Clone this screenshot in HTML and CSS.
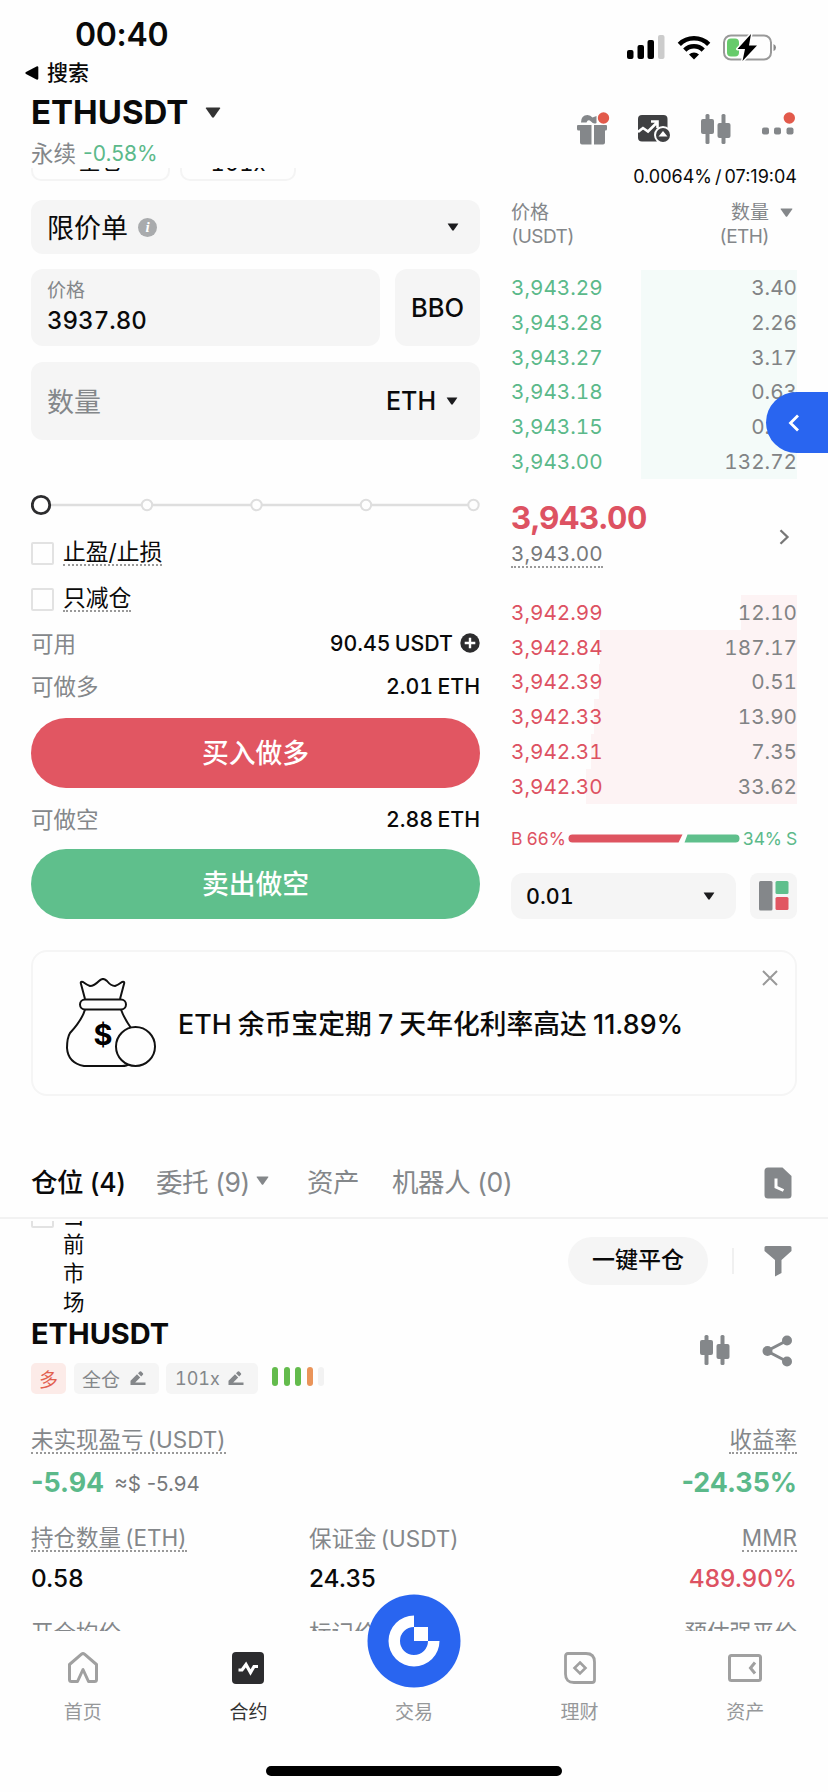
FILE: index.html
```html
<!DOCTYPE html>
<html lang="zh-CN">
<head>
<meta charset="utf-8">
<title>ETHUSDT 永续</title>
<link rel="stylesheet" href="styles.css">
</head>
<body>
<svg class="defs" width="0" height="0">
  <symbol id="tri" viewBox="0 0 14 10"><path d="M1 0.5h12q1 0 .4 .9L8 9.200q-1 1.200-2 0L.6 1.400Q0 .5 1 .5z" fill="currentColor"/></symbol>
  <symbol id="candles" viewBox="0 0 30 30"><g fill="currentColor"><rect x="4.500" y="0" width="4" height="30" rx="1.500"/><rect x="0" y="5" width="13" height="15" rx="2"/><rect x="20.500" y="0" width="4" height="30" rx="1.500"/><rect x="16.500" y="9" width="13" height="15" rx="2"/></g></symbol>
  <symbol id="pencil" viewBox="0 0 16 15"><path d="M.5 12.500V9.800L7 3.300l3.200 3.200-5 5H15.500V14H.5zM8 2.300 9.800.6q.7-.6 1.400 0l1.700 1.700q.7.7 0 1.400L11.200 5.500z" fill="currentColor"/></symbol>
</svg>
<div class="screen">
  <div class="status">
    <span class="time">00:40</span>
    <div class="status-icons">
      <svg width="38" height="24" viewBox="0 0 38 24"><rect x="0" y="15" width="6.500" height="9" rx="2"/><rect x="10.500" y="10" width="6.500" height="14" rx="2"/><rect x="20.500" y="5" width="6.500" height="19" rx="2"/><rect x="31" y="0" width="6.500" height="24" rx="2" fill="#ccc"/></svg>
      <svg width="34" height="25" viewBox="0 0 34 25"><g fill="none" stroke="#000" stroke-width="4.600"><path d="M2.300 9.300a21 21 0 0 1 29.400 0"/><path d="M7.800 15a13 13 0 0 1 18.400 0"/></g><path d="M17 24.500l-5-5a7.200 7.200 0 0 1 10 0z"/></svg>
      <svg width="54" height="27" viewBox="0 0 54 27"><rect x="1" y="1.500" width="47" height="24" rx="7" fill="none" stroke="#999" stroke-width="2"/><path d="M50.500 10v7q2.500-1 2.500-3.500t-2.500-3.500z" fill="#888"/><rect x="4" y="4.500" width="12" height="18" rx="4" fill="#67cb6b"/><path d="M28 0 14.500 15H22l-2.500 12L34 11.500h-8z" stroke="#fefefe" stroke-width="3" paint-order="stroke" stroke-linejoin="round"/></svg>
    </div>
  </div>
  <div class="back"><svg width="14" height="14" viewBox="0 0 14 14"><path d="M1 6Q-.3 7 1 8l10.500 5.600q1.800.6 1.800-1V1.400q0-1.600-1.800-1z"/></svg><span>搜索</span></div>

  <header class="header">
    <div class="head-left">
      <div class="pair"><span class="symbol">ETHUSDT</span><svg class="c-dark" width="16" height="11"><use href="#tri"/></svg></div>
      <div class="perp"><span>永续</span><span class="pct">-0.58%</span></div>
    </div>
    <div class="head-icons">
      <svg width="34" height="34" viewBox="0 0 34 34"><g fill="#84878a"><path d="M1 13h13.500v19.500H5q-2 0-2-2V18.500H1.500Q0 18.500 0 17v-3q0-1 1-1zM17 13h12q1 0 1 1v3q0 1.500-1.500 1.500H28v12q0 2-2 2h-9z"/><path d="M4 10.500q0-7.500 6.500-7.500 3 0 5 2.500l4-1.500v7q-3 1.500-5.500-1.500Q11 6.500 9.500 10.500z"/></g><circle cx="26.500" cy="6" r="5.700" fill="#e25a4b"/></svg>
      <svg class="g1" width="34" height="28" viewBox="0 0 34 28"><rect x="0" y="0" width="29.500" height="26.500" rx="4" fill="#3f4042"/><path d="M0 17l5-4 5 3.500 9-9M13 6.500h6.500V13" fill="none" stroke="#fff" stroke-width="2.600"/><circle cx="25" cy="20" r="9" fill="#fefefe"/><circle cx="25" cy="20" r="7" fill="#3f4042"/><path d="M25 16l4.500 5.500h-9z" fill="#fff"/></svg>
      <svg class="g2 c-gray" width="30" height="30"><use href="#candles"/></svg>
      <svg class="g3" width="34" height="34" viewBox="0 0 34 34"><g fill="#84878a"><rect x="0" y="15.500" width="7" height="7" rx="2"/><rect x="12" y="15.500" width="7" height="7" rx="2"/><rect x="24.500" y="15.500" width="7" height="7" rx="2"/></g><circle cx="27.300" cy="6" r="5.700" fill="#e25a4b"/></svg>
    </div>
  </header>

  <div class="trade">
    <section class="form">
      <div class="chips"><span class="chip chip-a">全仓</span><span class="chip chip-b">101x</span></div>
      <div class="field select"><span class="type">限价单</span><i class="info">i</i><svg class="push c-black" width="12" height="8"><use href="#tri"/></svg></div>
      <div class="price-row">
        <div class="field price"><span class="lbl">价格</span><span class="val">3937.80</span></div>
        <div class="field bbo">BBO</div>
      </div>
      <div class="field amount"><span class="ph">数量</span><span class="unit">ETH</span><svg class="c-black" width="12" height="8"><use href="#tri"/></svg></div>
      <svg class="slider" width="449" height="22" viewBox="0 0 449 22"><path d="M20 11H440" stroke="#dedede" stroke-width="2.500"/><g fill="#fefefe" stroke="#dedede" stroke-width="2"><circle cx="116" cy="11" r="5.200"/><circle cx="225.500" cy="11" r="5.200"/><circle cx="335" cy="11" r="5.200"/><circle cx="442.500" cy="11" r="5.200"/></g><circle cx="10" cy="11" r="8.700" fill="#fefefe" stroke="#2c2c2e" stroke-width="2.800"/></svg>
      <div class="check"><i class="box"></i><span class="dot">止盈/止损</span></div>
      <div class="check"><i class="box"></i><span class="dot">只减仓</span></div>
      <div class="kv avail"><span>可用</span><b>90.45 USDT</b><svg width="20" height="20" viewBox="0 0 20 20"><circle cx="10" cy="10" r="9.700" fill="#2c2c2e"/><path d="M10 4.700v10.600M4.700 10h10.600" stroke="#fff" stroke-width="2.400"/></svg></div>
      <div class="kv long"><span>可做多</span><b>2.01 ETH</b></div>
      <button class="btn buy">买入做多</button>
      <div class="kv short"><span>可做空</span><b>2.88 ETH</b></div>
      <button class="btn sell">卖出做空</button>
    </section>

    <section class="book">
      <div class="funding">0.0064% / 07:19:04</div>
      <div class="book-head">
        <div>价格<br><span class="u">(USDT)</span></div>
        <div class="qty-head"><div>数量<br><span class="u">(ETH)</span></div><svg width="13" height="9"><use href="#tri"/></svg></div>
      </div>
      <div class="rows up">
        <div class="row" style="--w:156px"><span>3,943.29</span><em>3.40</em></div>
        <div class="row" style="--w:156px"><span>3,943.28</span><em>2.26</em></div>
        <div class="row" style="--w:156px"><span>3,943.27</span><em>3.17</em></div>
        <div class="row" style="--w:156px"><span>3,943.18</span><em>0.63</em></div>
        <div class="row" style="--w:156px"><span>3,943.15</span><em>0.15</em></div>
        <div class="row" style="--w:156px"><span>3,943.00</span><em>132.72</em></div>
        <div class="drawer"><svg width="12" height="18" viewBox="0 0 12 18"><path d="M10 1.500 2.500 9l7.500 7.500" fill="none" stroke="#fff" stroke-width="2.800"/></svg></div>
      </div>
      <div class="mid">
        <div><div class="last">3,943.00</div><span class="mark">3,943.00</span></div>
        <svg width="11" height="16" viewBox="0 0 11 16"><path d="M1.500 1.200 8.500 8l-7 6.800" fill="none" stroke="#777" stroke-width="2.300"/></svg>
      </div>
      <div class="rows down">
        <div class="row" style="--w:56px"><span>3,942.99</span><em>12.10</em></div>
        <div class="row" style="--w:197px"><span>3,942.84</span><em>187.17</em></div>
        <div class="row" style="--w:198px"><span>3,942.39</span><em>0.51</em></div>
        <div class="row" style="--w:203px"><span>3,942.33</span><em>13.90</em></div>
        <div class="row" style="--w:206px"><span>3,942.31</span><em>7.35</em></div>
        <div class="row" style="--w:211px"><span>3,942.30</span><em>33.62</em></div>
      </div>
      <div class="ratio"><span class="b">B 66%</span><svg width="172" height="9" viewBox="0 0 172 9"><path d="M4.500.5H114.500L110.500 8.500H4.500a4 4 0 0 1 0-8z" fill="#de5460"/><path d="M119.500.5H167.500a4 4 0 0 1 0 8H116.500z" fill="#5fbf8c"/></svg><span class="s">34% S</span></div>
      <div class="tick">
        <div class="field step"><span>0.01</span><svg class="c-black" width="12" height="8"><use href="#tri"/></svg></div>
        <div class="field layout"><svg width="30" height="30" viewBox="0 0 30 30"><rect x="0" y="0" width="13.500" height="29.500" rx="1.500" fill="#84878a"/><rect x="16.500" y="0" width="13" height="13" rx="1.500" fill="#5fbf8c"/><rect x="16.500" y="16" width="13" height="13" rx="1.500" fill="#e15662"/></svg></div>
      </div>
    </section>
  </div>

  <div class="promo">
    <svg class="bag" width="92" height="90" viewBox="0 0 92 90"><g fill="none" stroke="#111" stroke-width="2" stroke-linejoin="round"><path d="M19 21 15 6q-1-3 2-2 4 3 7 4 4 0 9-5 4-4 8 0 4 5 8 5 3-1 7-4 3-1 2 2L54 21"/><rect x="14" y="21.500" width="46" height="10" rx="5"/><path d="M19 31.500Q16 42 4 55 1 60 1 70q1 15 17 18h38q5 0 7-2M55 31.500Q58 40 65 50"/><circle cx="69.500" cy="68.500" r="19.500" fill="#fefefe"/></g><text x="37" y="67" class="dollar">$</text></svg>
    <span class="promo-text">ETH 余币宝定期 7 天年化利率高达 11.89%</span>
    <svg class="close" width="16" height="16" viewBox="0 0 16 16"><path d="M1 1l14 14M15 1 1 15" stroke="#999" stroke-width="2"/></svg>
  </div>

  <nav class="tabs">
    <span class="tab t1">仓位 (4)</span>
    <span class="tab t2">委托 (9)<svg width="13" height="9"><use href="#tri"/></svg></span>
    <span class="tab t3">资产</span>
    <span class="tab t4">机器人 (0)</span>
    <svg class="push history" width="28" height="32" viewBox="0 0 28 32"><path d="M4 .5H18.500L27.500 9V28q0 3.500-3.500 3.500H4Q.5 31.500.5 28V4Q.5.500 4 .5z" fill="#84878a"/><path d="M12 11.500v8.500l7.500 3.500" fill="none" stroke="#fff" stroke-width="3"/></svg>
  </nav>

  <div class="positions">
    <div class="filter">
      <div class="market"><i class="box"></i><span>当前市场</span></div>
      <span class="pill">一键平仓</span>
      <i class="vline"></i>
      <svg width="28" height="32" viewBox="0 0 28 32"><path d="M2 1H26q1.500 0 1.500 1.500V6L17.500 15V28L11 31.500V15L.5 6V2.500Q.5 1 2 1z" fill="#84878a"/></svg>
    </div>
    <div class="pos-head">
      <div>
        <div class="pos-name">ETHUSDT</div>
        <div class="tags">
          <span class="tag side">多</span>
          <span class="tag mode">全仓<svg width="16" height="15"><use href="#pencil"/></svg></span>
          <span class="tag lev">101x<svg width="16" height="15"><use href="#pencil"/></svg></span>
          <span class="adl"><i></i><i></i><i></i><i class="o"></i><i class="e"></i></span>
        </div>
      </div>
      <div class="pos-icons">
        <svg class="c-gray" width="30" height="30"><use href="#candles"/></svg>
        <svg width="31" height="32" viewBox="0 0 31 32"><path d="M25 5.500 5 16l20 10.500" fill="none" stroke="#84878a" stroke-width="3"/><g fill="#84878a"><circle cx="25" cy="5.500" r="5"/><circle cx="5.500" cy="16" r="5"/><circle cx="25" cy="26.500" r="5"/></g></svg>
      </div>
    </div>
    <div class="cell-row r1"><span class="gray dot">未实现盈亏 (USDT)</span><span class="gray dot right">收益率</span></div>
    <div class="cell-row r2"><span class="pnl">-5.94</span><span class="approx">≈$ -5.94</span><span class="pnl right">-24.35%</span></div>
    <div class="cell-row r3"><span class="c1"><span class="gray dot">持仓数量 (ETH)</span></span><span class="gray">保证金 (USDT)</span><span class="gray dot right">MMR</span></div>
    <div class="cell-row r4"><span class="c1">0.58</span><span>24.35</span><span class="right red">489.90%</span></div>
    <div class="cell-row r5"><span class="gray c1">开仓均价</span><span class="gray">标记价格</span><span class="gray right">预估强平价</span></div>
  </div>

  <footer class="nav">
    <div class="item"><svg width="34" height="34" viewBox="0 0 34 34"><path d="M3.500 13.500 15.500 3.200q1.500-1.200 3 0L30.500 13.500V28.500q0 2-2 2H22.500L17 18.500 11.500 30.500H5.500q-2 0-2-2z" fill="none" stroke="#a0a0a0" stroke-width="3" stroke-linejoin="round"/></svg><span>首页</span></div>
    <div class="item on"><svg width="34" height="34" viewBox="0 0 34 34"><rect x="1" y="1" width="32" height="32" rx="4" fill="#2c2c2e"/><path d="M7.500 19h3.500l4-5.500L19.500 21.500 23 15.500H27" fill="none" stroke="#fff" stroke-width="3.200"/></svg><span>合约</span></div>
    <div class="item"><svg class="orb" width="94" height="94" viewBox="-47 -47 94 94"><circle r="46.500" fill="#2965f0"/><path d="M0-25.500A25.500 25.500 0 1 0 25.500 0H14A14 14 0 1 1 0-14zM0-14H14V0H0z" fill="#fff"/></svg><span class="orb-label">交易</span></div>
    <div class="item"><svg width="34" height="34" viewBox="0 0 34 34"><path d="M5 2.500H23q8.500 0 8.500 8.500V29q0 2.500-2.500 2.500H11Q2.500 31.500 2.500 23V5Q2.500 2.500 5 2.500z" fill="none" stroke="#a0a0a0" stroke-width="2.800"/><path d="M17 11.500l5.500 5.500-5.500 5.500-5.500-5.500z" fill="none" stroke="#a0a0a0" stroke-width="2.600"/></svg><span>理财</span></div>
    <div class="item"><svg width="36" height="34" viewBox="0 0 36 34"><rect x="2.500" y="4.500" width="31" height="25" rx="2" fill="none" stroke="#a0a0a0" stroke-width="3"/><path d="M28 11.500 23.500 17l4.500 5.500" fill="none" stroke="#a0a0a0" stroke-width="3"/></svg><span>资产</span></div>
  </footer>
  <div class="home-bar"><i></i></div>
</div>
</body>
</html>
```
FILE: styles.css
```css
* { box-sizing: border-box; }
body { margin: 0; background: #fefefe; font-family: Inter, "Noto Sans CJK SC", sans-serif; color: #0a0a0a; }
svg { display: block; flex: none; }
i, em { font-style: normal; }
.defs { position: absolute; }
.screen { width: 828px; height: 1792px; overflow: hidden; display: flex; flex-direction: column; background: #fefefe; white-space: nowrap; }
.screen > * { flex: none; }
.c-dark { color: #333; } .c-black { color: #1c1c1e; } .c-gray { color: #84878a; }
.push, .right { margin-left: auto; }

.status { height: 62px; display: flex; justify-content: space-between; padding: 15px 51px 0 75px; }
.time { font-size: 32px; line-height: 40px; font-weight: 600; letter-spacing: -.3px; }
.status-icons { display: flex; align-items: center; gap: 12px; height: 38px; margin-top: 13px; }
.back { height: 22px; display: flex; align-items: center; gap: 8px; padding-left: 25px; font-size: 21px; line-height: 22px; font-weight: 500; }

.header { height: 84px; display: flex; justify-content: space-between; padding: 8px 31px 0; }
.pair { display: flex; align-items: center; gap: 17px; height: 40px; }
.symbol { font-size: 33px; font-weight: 700; line-height: 40px; }
.perp { display: flex; align-items: center; gap: 7px; height: 30px; margin-top: 7px; font-size: 22.500px; color: #84878a; line-height: 30px; }
.pct { color: #5bb98a; font-size: 21px; }
.head-icons { display: flex; align-items: center; height: 74px; width: 220px; }
.g1 { margin-left: 27px; } .g2 { margin-left: 29px; } .g3 { margin-left: 31px; }

.trade { display: flex; padding: 0 31px; height: 782px; font-variant-numeric: tabular-nums; }
.form { width: 449px; }
.chips { height: 32px; overflow: hidden; display: flex; gap: 10px; }
.chip { height: 48px; margin-top: -35px; border: 2px solid #f4f4f4; border-radius: 10px; font-size: 22px; line-height: 53px; text-align: center; }
.chip-a { width: 139px; } .chip-b { width: 116px; line-height: 56px; }
.field { background: #f5f5f5; border-radius: 12px; display: flex; align-items: center; }
.select { height: 54px; padding: 0 21px 0 16px; font-size: 27px; }
.type { margin-top: -2px; }
.info { width: 19px; height: 19px; border-radius: 50%; background: #a9abad; color: #fff; margin-left: 10px; font: italic bold 15px/19px "Liberation Serif", serif; text-align: center; }
.price-row { display: flex; gap: 15px; margin-top: 15px; height: 77px; }
.price { width: 349px; flex-direction: column; align-items: flex-start; padding: 8px 16px 6px; }
.lbl { font-size: 19px; line-height: 27px; color: #84878a; }
.val { font-size: 24px; line-height: 34px; font-weight: 500; }
.bbo { flex: 1; justify-content: center; font-size: 25.500px; font-weight: 500; }
.amount { height: 78px; margin-top: 16px; padding: 0 22px 0 16px; }
.ph { font-size: 27px; color: #84878a; margin-top: -2px; }
.unit { margin: 0 10px 0 auto; font-size: 25px; font-weight: 500; }
.slider { margin: 54px 0 14px; }
.check { height: 46px; display: flex; align-items: center; gap: 9px; }
.box { width: 23px; height: 23px; border: 2px solid #e2e2e2; border-radius: 2px; flex: none; }
.check .dot { font-size: 22.800px; line-height: 24px; }
.dot { border-bottom: 2px dotted #999; }
.kv { display: flex; align-items: center; font-size: 22.500px; color: #84878a; height: 43px; }
.kv span { margin-top: -2px; }
.kv b { margin-left: auto; font-weight: 500; font-size: 21.300px; color: #0a0a0a; word-spacing: -1.500px; }
.kv svg { margin-left: 7px; }
.avail { margin-top: -1px; }
.btn { display: block; width: 449px; height: 70px; margin: 0; border: 0; border-radius: 35px; color: #fff; font: 500 26.800px/68px Inter, "Noto Sans CJK SC", sans-serif; }
.buy { background: #e15662; margin-top: 11px; }
.sell { background: #5fbf8c; }
.short { height: 61px; }

.book { width: 286px; margin-left: 31px; }
.funding { height: 33px; line-height: 17px; text-align: right; font-size: 18px; word-spacing: -2px; font-variant-numeric: normal; }
.book-head { display: flex; justify-content: space-between; font-size: 19px; line-height: 24px; color: #84878a; height: 69px; }
.u { letter-spacing: -.6px; }
.qty-head { display: flex; gap: 11px; text-align: right; padding-right: 4px; }
.qty-head svg { margin-top: 7px; }
.rows { position: relative; font-size: 20.700px; }
.row { display: flex; justify-content: space-between; height: 34.800px; line-height: 36px; background: linear-gradient(var(--tint), var(--tint)) right top / var(--w) 100% no-repeat; }
.row em { color: #818385; }
.up { --tint: #f4fbf9; color: #5bb98a; }
.down { --tint: #fdf3f4; color: #dd5262; }
.drawer { position: absolute; right: -31px; top: 122px; width: 62px; height: 61px; border-radius: 31px 0 0 31px; background: #2965f0; display: flex; align-items: center; padding-left: 22px; }
.mid { display: flex; justify-content: space-between; align-items: center; height: 116px; padding: 0 7px 0 0; }
.last { color: #dd5262; font-size: 31.500px; font-weight: 700; line-height: 40px; letter-spacing: -.4px; margin-top: -8px; }
.mark { display: inline-block; border-bottom: 2px dotted #999; color: #77797b; font-size: 20.700px; line-height: 25px; margin-top: 3px; }
.ratio { display: flex; align-items: center; justify-content: space-between; height: 34px; margin-top: 18px; font-size: 17.500px; letter-spacing: -.3px; }
.ratio .b { color: #dd5262; } .ratio .s { color: #5bb98a; }
.tick { display: flex; justify-content: space-between; margin-top: 17px; height: 46px; }
.step { width: 225px; padding: 0 21px 0 15px; justify-content: space-between; font-size: 21.500px; font-weight: 500; }
.layout { width: 47px; justify-content: center; border-radius: 8px; }

.promo { margin: 0 31px; height: 146px; border: 2px solid #f5f5f5; border-radius: 16px; display: flex; align-items: center; padding: 0 17px 0 33px; }
.dollar { font: 700 29px Inter, sans-serif; text-anchor: middle; }
.promo-text { margin-left: 20px; font-size: 26.800px; font-weight: 500; margin-top: -2px; word-spacing: -1px; }
.close { margin: 0 0 91px auto; }

.tabs { height: 123px; padding: 47px 36px 0 31px; border-bottom: 2px solid #f2f2f2; display: flex; align-items: center; font-size: 26.500px; color: #84878a; }
.tab { display: flex; align-items: center; gap: 6px; letter-spacing: -.4px; }
.history { margin-top: 6px; }
.t1 { color: #0a0a0a; font-weight: 500; width: 125px; }
.t2 { width: 151px; } .t3 { width: 85px; }

.positions { height: 410px; margin-top: 2px; overflow: hidden; padding: 0 31px; }
.filter { display: flex; align-items: center; height: 79px; padding-right: 5px; }
.market { display: flex; gap: 9px; margin-top: -4px; height: 83px; width: 60px; }
.market .box { margin-top: -12px; }
.market span { width: 22px; font-size: 21.500px; line-height: 29px; white-space: normal; margin-top: -16px; }
.pill { margin-left: auto; width: 140px; height: 48px; border-radius: 24px; background: #f5f5f5; text-align: center; font-size: 23px; line-height: 46px; font-weight: 500; }
.vline { width: 2px; height: 26px; background: #f0f0f0; margin: 0 30px 0 24px; }
.pos-head { display: flex; justify-content: space-between; margin-top: 16px; height: 100px; }
.pos-name { font-size: 29px; font-weight: 700; line-height: 36px; }
.tags { display: flex; margin-top: 11px; align-items: center; height: 31px; font-variant-numeric: tabular-nums; }
.tag { display: flex; align-items: center; justify-content: space-between; height: 31px; background: #f5f5f5; border-radius: 5px; font-size: 19px; color: #84878a; }
.side { width: 35px; justify-content: center; background: #fcebe8; color: #e2604f; }
.mode { width: 85px; margin-left: 8px; padding: 0 13px 0 8px; }
.lev { width: 92px; margin-left: 7px; padding: 0 14px 0 9px; font-size: 18px; }
.adl { display: flex; gap: 5.500px; margin: -4px 0 0 14px; }
.adl i { width: 6px; height: 19px; border-radius: 3px; background: #63bb4c; }
.adl .o { background: #ea9459; } .adl .e { background: #f2f2f2; }
.pos-icons { display: flex; gap: 32px; padding: 19px 4px 0 0; align-items: flex-start; }
.cell-row { display: flex; align-items: center; }
.gray { color: #84878a; font-size: 22.500px; line-height: 29px; word-spacing: -2px; }
.gray.dot { line-height: 25px; }
.c1 { width: 278px; }
.c1 .dot { display: inline-block; }
.r1 { height: 40px; margin-top: 4px; }
.r2 { height: 44px; }
.pnl { color: #5bb98a; font-weight: 700; font-size: 26.800px; }
.approx { color: #77797b; font-size: 20.500px; margin-left: 10px; padding-top: 3px; }
.r3 { height: 40px; margin-top: 14px; }
.r4 { height: 44px; font-size: 24.300px; font-weight: 500; margin-top: -2px; }
.red { color: #dd5262; }
.r5 { height: 40px; margin-top: 12px; }

.nav { display: grid; grid-template-columns: repeat(5, 1fr); height: 128px; background: #fefefe; padding-top: 20px; }
.item { display: flex; flex-direction: column; align-items: center; color: #96989a; font-size: 19px; line-height: 26px; position: relative; }
.item span { margin-top: 15px; }
.item .orb-label { margin-top: 49px; }
.orb { position: absolute; top: -57px; left: 50%; margin-left: -47px; }
.on { color: #333; }
.home-bar { flex: 1; padding: 7px 266px 0; }
.home-bar i { display: block; height: 10px; border-radius: 5px; background: #000; }
```
